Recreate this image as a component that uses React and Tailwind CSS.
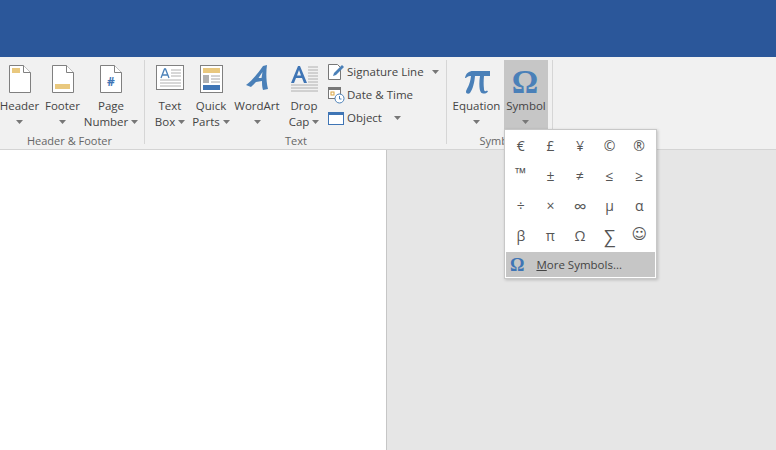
import React from "react";

const Caret = ({ className = "" }) => (
  <svg width="7" height="4" viewBox="0 0 7 4" className={className}>
    <path d="M0 0h7L3.5 4z" fill="#777" />
  </svg>
);

const PageIcon = ({ children }) => (
  <svg width="22" height="28" viewBox="0 0 22 28">
    <path d="M.5.5h14l7 7v20H.5z" fill="#fff" stroke="#808080" />
    <path d="M14.500.5v7h7" fill="#fff" stroke="#808080" />
    {children}
  </svg>
);

const TextBoxIcon = () => (
  <svg width="29" height="26" viewBox="0 0 29 26">
    <rect x=".5" y=".5" width="27" height="24" fill="#fff" stroke="#808080" />
    <path d="M5 13l3.500-9h1L13 13M6.300 10h5.400" fill="none" stroke="#4a80b8" strokeWidth="1.300" />
    <path d="M15 5h10M15 8h10M15 11h10M4 15h21M4 18h21M4 21h21" stroke="#b0b0b0" />
  </svg>
);

const QuickPartsIcon = () => (
  <svg width="23" height="28" viewBox="0 0 23 28">
    <rect x=".5" y=".5" width="22" height="27" fill="#fff" stroke="#808080" />
    <rect x="3" y="3" width="17" height="5" fill="#e9c87e" />
    <rect x="3" y="10" width="6" height="8" fill="#b0b0b0" />
    <path d="M11 11h9M11 14h9M11 17h9" stroke="#a8a8a8" />
    <rect x="3" y="20" width="17" height="5" fill="#3f75b5" />
  </svg>
);

const WordArtIcon = () => (
  <svg width="23" height="26" viewBox="0 0 23 26">
    <path d="M0 20C6 16 12 8 17 1l4-1c-1 7-1 16 1 24l-5 1c-1-3-1-6-1-9l-6 1c-2 2-4 4-5 5zM15.500 13l1-6-4 6z" fill="#4a80b8" fillRule="evenodd" />
  </svg>
);

const DropCapIcon = () => (
  <svg width="29" height="28" viewBox="0 0 29 28">
    <path d="M1 18L8 1h2l7 17h-3l-2-5H6l-2 5zM7 10.500h4L9 5z" fill="#3f75b5" fillRule="evenodd" />
    <path d="M18 2h10M18 5h10M18 8h10M18 11h10M18 14h10M18 17h10M1 20h27M1 23h27M1 26h27" stroke="#b0b0b0" />
  </svg>
);

const PiIcon = () => (
  <svg width="26" height="24" viewBox="0 0 26 24" className="mt-[5px]">
    <path
      d="M1 8C2 3 5 1 9 1H26V6H20C19.500 11 19.500 15 20 19C20 21 21 22 23 20.500L24 21.500C23 23.500 19 24.500 17 22.500C15 20 15 12 16 6H11C10.500 12 9 19 6 23C5 24 2 24 2 22C2 19 6 16 7 6H6C4 6 3 7 2 8Z"
      fill="#4a80b8"
    />
  </svg>
);

const SignatureIcon = () => (
  <svg width="17" height="16" viewBox="0 0 17 16">
    <path d="M.5.5h9l3 3v12H.5z" fill="#fff" stroke="#777" />
    <path d="M5 12l1-3 8-8 2 2-8 8z" fill="#4a80b8" />
  </svg>
);

const DateIcon = () => (
  <svg width="17" height="17" viewBox="0 0 17 17">
    <rect x=".5" y=".5" width="12" height="11" fill="#fff" stroke="#777" />
    <rect x="1" y="1" width="11" height="2" fill="#777" />
    <rect x="3" y="5" width="3" height="3" fill="none" stroke="#d9a441" />
    <circle cx="11.500" cy="11.500" r="4.500" fill="#fff" stroke="#4a80b8" />
    <path d="M11.500 9v3h2" fill="none" stroke="#4a80b8" />
  </svg>
);

const ObjectIcon = () => (
  <svg width="16" height="13" viewBox="0 0 16 13">
    <rect x=".5" y=".5" width="15" height="12" fill="#fff" stroke="#3f75b5" />
    <rect x="1" y="1" width="14" height="2" fill="#3f75b5" />
  </svg>
);

const BigButton = ({ icon, lines, width, active, caretInline }) => (
  <div
    className={`flex flex-col items-center shrink-0 h-[70px] ${active ? "bg-[#c6c6c6]" : ""}`}
    style={{ width }}
  >
    <div className="h-[39px] flex items-start justify-center pt-[5px]">{icon}</div>
    <div className="leading-[16px] mt-[1px] text-center whitespace-nowrap flex flex-col items-center">
      <span>{lines[0]}</span>
      {caretInline ? (
        <span className="flex items-center gap-[3px]">
          {lines[1]}
          <Caret />
        </span>
      ) : (
        <span className="h-[16px] flex items-center">
          <Caret />
        </span>
      )}
    </div>
  </div>
);

const GroupLabel = ({ children, className = "" }) => (
  <div className={`text-center text-[11px] leading-[16px] text-[#666] h-[18px] mt-[3px] ${className}`}>{children}</div>
);

const symbols = [
  { s: "€" }, { s: "£" }, { s: "¥" }, { s: "©" }, { s: "®" },
  { s: "™", c: "text-[15px] -mt-[6px]" }, { s: "±" }, { s: "≠" }, { s: "≤" }, { s: "≥" },
  { s: "÷" }, { s: "×" }, { s: "∞", c: "text-[18px]" }, { s: "µ" }, { s: "α" },
  { s: "β" }, { s: "π" }, { s: "Ω" }, { s: "∑", c: "text-[18px]" }, { s: "☺", c: "text-[15px] -mt-[3px] font-['DejaVu_Sans',sans-serif]" },
];

export default function App() {
  return (
    <div className="w-[776px] h-[450px] overflow-hidden relative text-[11.5px] text-[#444] bg-[#e6e6e6] font-['Open_Sans','Noto_Sans',sans-serif]">
      <div className="h-[57px] bg-[#2b579a]" />

      {/* ribbon */}
      <div className="h-[93px] bg-[#f1f1f1] border-b border-[#d4d4d4] flex pt-[3px]">
        <div className="w-[145px] shrink-0 border-r border-[#d6d6d6] mb-[5px]">
          <div className="flex">
            <BigButton
              width={39}
              lines={["Header"]}
              icon={
                <PageIcon>
                  <rect x="3" y="3" width="8" height="5" fill="#e9c87e" />
                </PageIcon>
              }
            />
            <BigButton
              width={47}
              lines={["Footer"]}
              icon={
                <PageIcon>
                  <rect x="3" y="19" width="15" height="5" fill="#e9c87e" />
                </PageIcon>
              }
            />
            <BigButton
              width={50}
              caretInline
              lines={["Page", "Number"]}
              icon={
                <PageIcon>
                  <text x="11" y="21" textAnchor="middle" fontSize="12" fontWeight="700" fill="#3f75b5">#</text>
                </PageIcon>
              }
            />
          </div>
          <GroupLabel className="pr-[5px]">Header &amp; Footer</GroupLabel>
        </div>

        <div className="w-[302px] shrink-0 border-r border-[#d6d6d6] mb-[5px] pl-[5px]">
          <div className="flex">
            <BigButton width={40} caretInline lines={["Text", "Box"]} icon={<TextBoxIcon />} />
            <BigButton width={42} caretInline lines={["Quick", "Parts"]} icon={<QuickPartsIcon />} />
            <BigButton width={50} lines={["WordArt"]} icon={<WordArtIcon />} />
            <BigButton width={44} caretInline lines={["Drop", "Cap"]} icon={<DropCapIcon />} />
            <div className="flex flex-col pt-[3px] pl-[2px] gap-[5px]">
              <div className="flex items-center h-[18px] gap-[2px]">
                <SignatureIcon />
                <span>Signature Line</span>
                <Caret className="ml-[6px]" />
              </div>
              <div className="flex items-center h-[18px] gap-[2px]">
                <DateIcon />
                <span>Date &amp; Time</span>
              </div>
              <div className="flex items-center h-[18px] gap-[3px]">
                <ObjectIcon />
                <span>Object</span>
                <Caret className="ml-[9px]" />
              </div>
            </div>
          </div>
          <GroupLabel className="pr-[4px]">Text</GroupLabel>
        </div>

        <div className="w-[106px] shrink-0 border-r border-[#d6d6d6] mb-[5px] pl-[5px]">
          <div className="flex gap-[3px]">
            <BigButton width={49} lines={["Equation"]} icon={<PiIcon />} />
            <BigButton
              width={44}
              active
              lines={["Symbol"]}
              icon={<span className="block h-[30px] text-[#4a80b8] text-[33px] leading-[34px] font-bold font-['Liberation_Serif',serif] -ml-[2px]">Ω</span>}
            />
          </div>
          <GroupLabel className="pr-[2px]">Symbols</GroupLabel>
        </div>
      </div>

      {/* document */}
      <div className="w-[387px] h-[300px] bg-white border-r border-[#c6c6c6]" />

      {/* symbol dropdown */}
      <div className="absolute left-[504px] top-[129px] w-[153px] h-[150px] bg-white border border-[#c8c8c8] shadow-[1px_1px_3px_rgba(0,0,0,0.2)] p-[1px]">
        <div className="grid grid-cols-5 grid-rows-[repeat(4,30px)] h-[120px] pr-[1px]">
          {symbols.map(({ s, c }) => (
            <div key={s} className="flex items-center justify-center text-[14px] leading-none text-[#555]">
              <span className={c}>{s}</span>
            </div>
          ))}
        </div>
        <div className="h-[25px] bg-[#c6c6c6] flex items-center pl-[4px] mt-[1px]">
          <span className="text-[#3f75b5] text-[18px] font-bold leading-none font-['Liberation_Serif',serif]">Ω</span>
          <span className="ml-[12px]">
            <span className="underline">M</span>ore Symbols...
          </span>
        </div>
      </div>
    </div>
  );
}
